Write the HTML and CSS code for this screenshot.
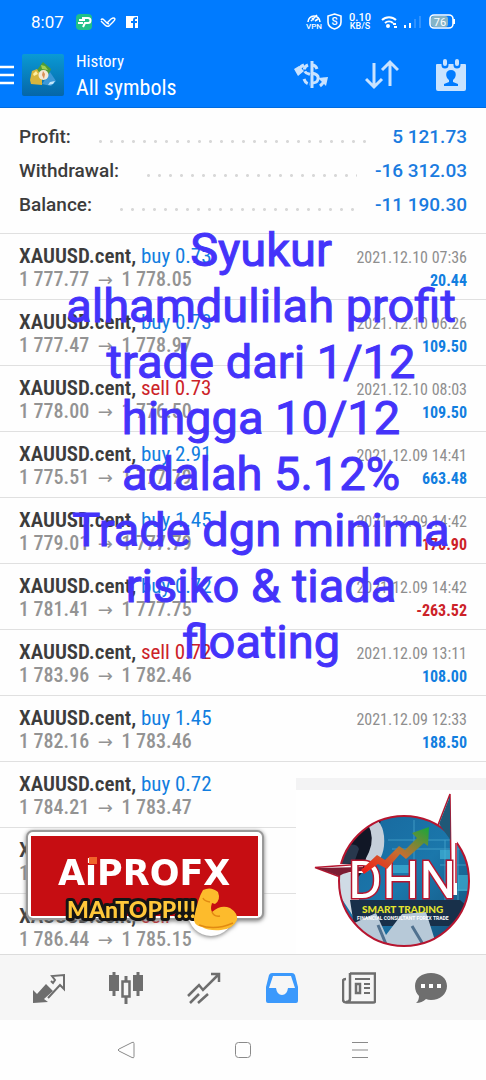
FILE: index.html
```
<!DOCTYPE html>
<html lang="en">
  <head>
    <meta charset="utf-8">
    <meta name="viewport" content="width=device-width, initial-scale=1">
    <title>History</title>
    <link rel="stylesheet" href="styles.css">
  </head>
  <body>
    <header>
      <div class="status">
        <span class="clock">8:07</span>
        <svg width="64" height="18" viewBox="0 0 64 18">
          <rect x="0" y="1" width="16" height="16" rx="4" fill="#1fc08a"/>
          <path d="M6 5h6a2 2 0 0 1 0 5H9l-2 4M3 7h6M2 10h5" fill="none" stroke="#fff" stroke-width="2"/>
          <path d="M25 7q1-2 3 0l3 3 4-4q3-2 4 0 0 1-2 3l-4 4q-2 1-4-1l-4-4M31 10l2 1" fill="none" stroke="#fff" stroke-width="1.400"/>
          <path d="M50 3h12v12h-3v-5h2V8h-2V7c0-1 0-1 2-1V4c-3 0-4 1-4 3v1h-2v2h2v5h-7z" fill="#fff"/>
        </svg>
        <svg class="status-right" width="150" height="20" viewBox="305 12 150 20">
          <g fill="none" stroke="#fff" stroke-width="1.6">
            <path d="M308 22a6 6 0 0 1 12 0M311 21l6-6M312 18l2 2M315 21l3-2"/>
            <path d="M334.500 14l6.500 2v6c0 4-3 6-6.500 7-3.500-1-6.500-3-6.500-7v-6z"/>
            <path d="M382 20a10 10 0 0 1 14 0M385 23a6 6 0 0 1 8 0" stroke-width="2"/>
            <rect x="430" y="15" width="23" height="13" rx="4"/>
          </g>
          <circle cx="388" cy="26" r="2" fill="#fff"/>
          <path d="M393 23h3v2h-3zM394 26h3v2h-3zM404 25h2v3h-2zM409 23h2v5h-2z" fill="#fff"/>
          <path d="M414 19h2v9h-2zM419 16h2v12h-2z" fill="#2f92ff"/>
          <rect x="431" y="16" width="17" height="11" rx="3" fill="#84b4c8"/>
          <path d="M454 19v5" stroke="#fff" stroke-width="2"/>
          <g fill="#fff" font-family="Roboto, sans-serif" font-weight="500" text-anchor="middle">
            <text x="314" y="29" font-size="8">VPN</text>
            <text x="334.500" y="25" font-size="10">S</text>
            <text x="360" y="21" font-size="11">0.10</text>
            <text x="360" y="29" font-size="9">KB/S</text>
            <text x="440" y="26" font-size="11" font-weight="400">76</text>
          </g>
        </svg>
      </div>
      <div class="toolbar">
        <button class="menu" aria-label="Menu">
          <svg width="14" height="20" viewBox="0 0 14 20"><path d="M0 2h14M0 10h14M0 18h14" stroke="#fff" stroke-width="2.500"/></svg>
        </button>
        <svg class="app-icon" width="42" height="42" viewBox="0 0 42 42">
          <defs>
            <linearGradient id="sea" x1="0" y1="0" x2="0" y2="1"><stop offset="0" stop-color="#0a9ad4"/><stop offset="1" stop-color="#0566a8"/></linearGradient>
          </defs>
          <rect width="42" height="42" rx="2" fill="url(#sea)"/>
          <path d="M15 16l6-8 8 7-2 5-12-1z" fill="#4c9c3a"/>
          <path d="M19 11l4 1 3 4-6-1z" fill="#a4cf52"/>
          <path d="M8 26l2-9 5-2 5 8v8l-11-1z" fill="#d7b53d"/>
          <path d="M11 20l3-3 2 3-4 2z" fill="#fff0a0"/>
          <path d="M28 18l6 9-5 5-9-2z" fill="#3c98d8"/>
          <path d="M28 28l5-1-2 3-5 1z" fill="#c3e6fa"/>
          <circle cx="21.500" cy="21" r="5" fill="#f3ead7"/>
          <path d="M21 17l2 3-1 5-2-4z" fill="#d99058"/>
        </svg>
        <div class="titles">
          <h1>History</h1>
          <p>All symbols</p>
        </div>
        <button aria-label="Currency">
          <svg width="36" height="34" viewBox="0 0 36 34" fill="none" stroke="#c9e3ff" stroke-width="3">
            <path d="M19 3v27M24 11c-1-3-2-4-5-4M19 15l3 1c5 2 4 9-3 9"/>
            <path d="M15 7c-5 2-5 8 1 9l3 1M11 21c1 3 3 5 6 5" stroke-dasharray="6 2"/>
            <path d="M6 13q0-4 5-6M32 20q-1 5-5 8"/>
            <path d="M1 11l5-3 5 5-6 5zM25 20l10-1-2 9z" fill="#c9e3ff" stroke="none"/>
          </svg>
        </button>
        <button aria-label="Sort">
          <svg width="34" height="34" viewBox="0 0 34 34" fill="none" stroke="#c9e3ff" stroke-width="3"><path d="M9 5v24M1 21l8 8 8-8M25 28V4M17 12l8-8 8 8"/></svg>
        </button>
        <button aria-label="Period">
          <svg width="32" height="34" viewBox="0 0 32 34">
            <path d="M2 6h28q1 0 1 1v24q0 2-2 2H3q-2 0-2-2V7q0-1 1-1z" fill="#c9e3ff"/>
            <path d="M10 3v4M22 3v4" stroke="#007bff" stroke-width="7" stroke-linecap="round"/>
            <path d="M10 3v3M22 3v3" stroke="#c9e3ff" stroke-width="4" stroke-linecap="round"/>
            <path d="M16 12c6 0 6 7 2 10v2l5 2v2H9v-2l5-2v-2c-4-3-4-10 2-10z" fill="#007bff"/>
          </svg>
        </button>
      </div>
    </header>

    <main>
      <dl class="summary">
        <div><dt>Profit:</dt><dd>5 121.73</dd></div>
        <div><dt>Withdrawal:</dt><dd>-16 312.03</dd></div>
        <div><dt>Balance:</dt><dd>-11 190.30</dd></div>
      </dl>

      <ul class="deals">
        <li>
          <div class="deal"><b>XAUUSD.cent,</b> <span class="buy">buy 0.73</span><p>1 777.77 <i>→</i> 1 778.05</p></div>
          <div class="result"><time>2021.12.10 07:36</time><b class="buy">20.44</b></div>
        </li>
        <li>
          <div class="deal"><b>XAUUSD.cent,</b> <span class="buy">buy 0.73</span><p>1 777.47 <i>→</i> 1 778.97</p></div>
          <div class="result"><time>2021.12.10 06:26</time><b class="buy">109.50</b></div>
        </li>
        <li>
          <div class="deal"><b>XAUUSD.cent,</b> <span class="sell">sell 0.73</span><p>1 778.00 <i>→</i> 1 776.50</p></div>
          <div class="result"><time>2021.12.10 08:03</time><b class="buy">109.50</b></div>
        </li>
        <li>
          <div class="deal"><b>XAUUSD.cent,</b> <span class="buy">buy 2.91</span><p>1 775.51 <i>→</i> 1 777.79</p></div>
          <div class="result"><time>2021.12.09 14:41</time><b class="buy">663.48</b></div>
        </li>
        <li>
          <div class="deal"><b>XAUUSD.cent,</b> <span class="buy">buy 1.45</span><p>1 779.01 <i>→</i> 1 777.79</p></div>
          <div class="result"><time>2021.12.09 14:42</time><b class="sell">-176.90</b></div>
        </li>
        <li>
          <div class="deal"><b>XAUUSD.cent,</b> <span class="buy">buy 0.72</span><p>1 781.41 <i>→</i> 1 777.75</p></div>
          <div class="result"><time>2021.12.09 14:42</time><b class="sell">-263.52</b></div>
        </li>
        <li>
          <div class="deal"><b>XAUUSD.cent,</b> <span class="sell">sell 0.72</span><p>1 783.96 <i>→</i> 1 782.46</p></div>
          <div class="result"><time>2021.12.09 13:11</time><b class="buy">108.00</b></div>
        </li>
        <li>
          <div class="deal"><b>XAUUSD.cent,</b> <span class="buy">buy 1.45</span><p>1 782.16 <i>→</i> 1 783.46</p></div>
          <div class="result"><time>2021.12.09 12:33</time><b class="buy">188.50</b></div>
        </li>
        <li>
          <div class="deal"><b>XAUUSD.cent,</b> <span class="buy">buy 0.72</span><p>1 784.21 <i>→</i> 1 783.47</p></div>
        </li>
        <li>
          <div class="deal"><b>XAUUSD.cent,</b><p>1</p></div>
        </li>
        <li>
          <div class="deal"><b>XAUUSD.cent,</b> <span class="sell">sell</span><p>1 786.44 <i>→</i> 1 785.15</p></div>
        </li>
      </ul>

      <p class="caption">Syukur<br>alhamdulilah profit<br>trade dari 1/12<br>hingga 10/12<br>adalah 5.12%<br>Trade dgn minima<br>risiko &amp; tiada<br>floating</p>

      <!-- AiPROFX sticker -->
      <div class="sticker">
        <svg width="242" height="110" viewBox="24 828 242 110">
          <rect x="27" y="831" width="236" height="88" rx="6" fill="#fff" stroke="#999" stroke-width="2"/>
          <circle cx="211" cy="913" r="23" fill="#fff"/>
          <rect x="31" y="836" width="227" height="80" fill="#c60d12"/>
          <text class="brand" x="58" y="885">AiPROFX</text>
          <path d="M89 857h8v7h-8z" fill="#f0642a"/>
          <text class="cheer" x="67" y="918">MAnTOPP!!!</text>
          <path d="M203 890q8-4 15 2 3 8-3 12l-3-1q-2 6 0 9 9-8 18-4 8 5 7 12-4 9-16 10-12 1-19-3-9-2-8-9 4-20 9-28z" fill="#fdbb2c"/>
          <path d="M210 902q-6-1-7-4M212 912q2 5 8 4M199 925q16 6 34-2" fill="none" stroke="#e18a12" stroke-width="1.500"/>
        </svg>
      </div>

      <!-- DHN sticker -->
      <div class="dhn">
        <svg width="190" height="164" viewBox="296 790 190 164">
          <defs>
            <linearGradient id="tech" x1="0" y1="0" x2="1" y2="1"><stop offset="0" stop-color="#17649a"/><stop offset=".5" stop-color="#1b77ab"/><stop offset="1" stop-color="#12486f"/></linearGradient>
            <linearGradient id="trend" x1="0" y1="1" x2="1" y2="0"><stop offset="0" stop-color="#f51616"/><stop offset=".5" stop-color="#c66e31"/><stop offset="1" stop-color="#16a83b"/></linearGradient>
            <clipPath id="disc"><circle cx="404" cy="881" r="65"/></clipPath>
          </defs>
          <g clip-path="url(#disc)">
            <path d="M330 810h150v144H330z" fill="url(#tech)"/>
            <path d="M388 840h85M392 849h80M440 865h30M440 890h30M414 820v50M445 840v80M458 845v70" stroke="#58b5d9" stroke-width="1" opacity=".6"/>
            <path d="M440 850h16v9h-16zM458 875h12v16h-12zM393 865h19v8h-19z" fill="#47bce0" opacity=".6"/>
            <path d="M335 885v-65h46l-6 21-8 26-14 16z" fill="#111726"/>
            <path d="M372 816q14 8 12 30-2 18-18 26-4-8 3-20 6-14-1-28z" fill="#c5cfda"/>
            <path d="M343 846q14-4 16 3l-5 14-14 2z" fill="#28384d"/>
            <path d="M336 872h22l1 30 11 12-8 16-22-34z" fill="#cfdbe5"/>
            <path d="M350 900h110l9 8-20 18h-95z" fill="#18304a"/>
            <path d="M350 925l26-12 10 22 16-21 24-2 12 38h-62z" fill="#b7c9d8"/>
            <path d="M378 925l10 24M412 926l12 20" stroke="#50718f" stroke-width="3"/>
          </g>
          <circle cx="404" cy="881" r="65" fill="none" stroke="#b6152f" stroke-width="2"/>
          <path d="M451 793h4l2 50v52h-6z" fill="#fff"/>
          <path d="M438 825l12-31 1 80M456 843v40" fill="none" stroke="#b6152f" stroke-width="1.500"/>
          <path d="M439 824l11-28 .5 44z" fill="#205877"/>
          <path d="M337 864h26v9h-26z" fill="#fff"/>
          <path d="M363 864l-48 3.500 24 9" fill="none" stroke="#b6152f" stroke-width="1.500"/>
          <path d="M317 868l46-1v4q-16 0-24 5z" fill="#7d1c33"/>
          <text class="dhn-name" x="348" y="898">DHN</text>
          <path d="M361 870l16-15 8 5 14-14 6 4 12-12-5-5 17-6-1 19-4-3-18 16-6-5-13 15-9-5-14 10z" fill="url(#trend)"/>
          <text class="dhn-line" x="362" y="913">SMART TRADING</text>
          <text class="dhn-small" x="357" y="920">FINANCIAL CONSULTANT FOREX TRADE</text>
        </svg>
      </div>
    </main>

    <nav class="tabs">
      <a href="#quotes" aria-label="Quotes">
        <svg width="34" height="32" viewBox="0 0 34 32"><path d="M1 31V18l4 4 9-10 7 7-9 8 4 3z" fill="#6e6e6e"/><path d="M19 9l2 2 2-3-3-4 12-1v14l-4-4-12 13" fill="none" stroke="#6e6e6e" stroke-width="2"/></svg>
      </a>
      <a href="#chart" aria-label="Chart">
        <svg width="34" height="34" viewBox="0 0 34 34"><path d="M5 1v24M29 1v24M17 5v5M17 26v7" stroke="#6e6e6e" stroke-width="3"/><path d="M0 4h10v16H0zM24 4h10v16H24z" fill="#6e6e6e"/><path d="M13.500 10.500h7v15h-7z" fill="none" stroke="#6e6e6e" stroke-width="2.500"/></svg>
      </a>
      <a href="#trade" aria-label="Trade">
        <svg width="34" height="32" viewBox="0 0 34 32" fill="none" stroke="#6e6e6e" stroke-width="2.500"><path d="M1 24l11-11 4 5L31 3M24 2h8v8M3 31l9-9M11 31l10-9"/></svg>
      </a>
      <a class="active" href="#history" aria-label="History">
        <svg width="34" height="32" viewBox="0 0 34 32"><path fill-rule="evenodd" d="M7 1h20q2 0 3 2l3 12v14q0 2-2 2H3q-2 0-2-2V15L4 3q1-2 3-2zM8 4L4 16h7q1 7 6 7t6-7h7L26 4z" fill="#3b99fc"/></svg>
      </a>
      <a href="#news" aria-label="News">
        <svg width="34" height="32" viewBox="0 0 34 32" fill="none" stroke="#6e6e6e" stroke-width="2.500"><path d="M8 1.500h25v28q0 1-2 1H4q-3 0-3-3V9q0-2 3-2M8 1v26q0 3-4 3"/><path d="M13 7h15M22 12h6M22 16h6M22 21h6" stroke-width="2"/><path d="M14 12h4v9h-4z"/></svg>
      </a>
      <a href="#messages" aria-label="Messages">
        <svg width="34" height="32" viewBox="0 0 34 32"><path d="M17 1c9 0 16 5 16 13s-7 14-16 14q-3 0-5-1-4 4-10 4 3-2 3-7-4-4-4-10C1 6 8 1 17 1z" fill="#6e6e6e"/><path d="M7 12h4v4H7zM15 12h4v4h-4zM23 12h4v4h-4z" fill="#fff"/></svg>
      </a>
    </nav>

    <footer>
      <button aria-label="Back"><svg width="18" height="18" viewBox="0 0 18 18"><path d="M15 1.500q2-1 2 1v13q0 2-2 1L2 10q-2-1 0-2z"/></svg></button>
      <button aria-label="Home"><svg width="18" height="18" viewBox="0 0 18 18"><rect x="1.500" y="1.500" width="15" height="15" rx="3"/></svg></button>
      <button aria-label="Recent apps"><svg width="18" height="18" viewBox="0 0 18 18"><path d="M1 1.500h16M1 9h16M1 16.500h16"/></svg></button>
    </footer>
  </body>
</html>
```
FILE: styles.css
```
* {
    box-sizing: border-box;
}

body {
    display: flex;
    flex-direction: column;
    height: 100vh;
    margin: 0;
    background: #fefefe;
    color: #3c3c3c;
    font-family: "Roboto Condensed", "Liberation Sans Narrow", Roboto, sans-serif;
}

h1, p, dl, dd, ul {
    margin: 0;
    padding: 0;
}

button {
    display: flex;
    padding: 0;
    border: none;
    background: none;
    cursor: pointer;
}

svg {
    display: block;
}

/* header */
header {
    flex: none;
    height: 108px;
    background: #007bff;
    border-bottom: 1px solid #006ce0;
    color: #fff;
}

.status {
    display: flex;
    align-items: center;
    height: 44px;
    padding: 0 31px;
}

.clock {
    margin-right: 12px;
    font: 17px/20px Roboto, sans-serif;
}

.status-right {
    margin-left: auto;
}

.toolbar {
    display: flex;
    align-items: center;
    height: 62px;
    padding-right: 19px;
}

.app-icon {
    margin: 0 12px 0 8px;
}

.titles {
    flex: 1;
}

.titles h1 {
    font-size: 17px;
    line-height: 26px;
    font-weight: 400;
}

.titles p {
    font-size: 22px;
    line-height: 28px;
}

.toolbar button + button {
    margin-left: 36px;
}

/* account totals */
main {
    position: relative;
    flex: 1;
    min-height: 0;
    overflow: hidden;
}

.summary {
    padding: 12px 19px 11px;
    border-bottom: 1px solid #e0e0e0;
    font: 500 19px/34px Roboto, sans-serif;
}

.summary div {
    display: flex;
    align-items: center;
}

.summary div::after {
    content: "";
    order: 1;
    flex: 1;
    height: 3px;
    margin: 8px 18px 0 24px;
    background: radial-gradient(circle, #d8d8d8 1px, transparent 2px) 0 0 / 11px 3px;
}

.summary dd {
    order: 2;
    color: #1a7be0;
}

/* deals */
.deals {
    list-style: none;
}

.deals li {
    display: flex;
    justify-content: space-between;
    height: 66px;
    padding: 10px 19px 0;
    border-bottom: 1px solid #e0e0e0;
}

.deal {
    font-size: 21px;
    line-height: 24px;
}

.deal b {
    font-weight: 600;
}

.deal p {
    color: #939393;
    font-size: 20px;
    font-weight: 500;
    line-height: 22px;
}

.deal i {
    margin: 0 4px;
    font: 18px/18px "DejaVu Sans", sans-serif;
}

.result {
    display: flex;
    flex-direction: column;
    padding-top: 2px;
    font-size: 16px;
    line-height: 23px;
    text-align: right;
}

.result time {
    color: #8e8e8e;
}

.buy {
    color: #127ee0;
}

.sell {
    color: #cc2228;
}

/* things laid over the list */
.caption {
    position: absolute;
    top: 114px;
    left: 36px;
    right: 0;
    color: #4433fa;
    font: 47px/56px Roboto, sans-serif;
    -webkit-text-stroke: 1px #4433fa;
    text-align: center;
    white-space: nowrap;
}

.sticker {
    position: absolute;
    left: 24px;
    bottom: 16px;
    filter: drop-shadow(0 1px 2px #777);
}

.brand {
    fill: #fff;
    font: bold 35px "DejaVu Sans", sans-serif;
}

.cheer {
    fill: #ffc83a;
    stroke: #151515;
    stroke-width: 6px;
    stroke-linejoin: round;
    paint-order: stroke;
    font: 900 23px Lato, sans-serif;
}

.dhn {
    position: absolute;
    right: 0;
    bottom: 0;
    border-top: 12px solid #f3f3f4;
    background: #fff;
}

.dhn-name {
    fill: #fff;
    stroke: #b6152f;
    stroke-width: 3px;
    paint-order: stroke;
    font: 52px Roboto, sans-serif;
}

.dhn-line {
    fill: #e6e52e;
    font: 900 10px Lato, sans-serif;
}

.dhn-small {
    fill: #fff;
    font: bold 5px Roboto, sans-serif;
}

/* bottom tabs */
.tabs {
    flex: none;
    display: grid;
    grid-template-columns: repeat(5, 13fr) 11fr;
    align-items: center;
    justify-items: center;
    height: 66px;
    padding: 0 22px 0 10px;
    border-top: 1px solid #dcdcdc;
    background: #f6f6f6;
}

footer {
    flex: none;
    display: grid;
    grid-template-columns: repeat(3, 1fr);
    align-items: center;
    justify-items: center;
    height: 60px;
    padding: 0 68px;
}

footer svg {
    fill: none;
    stroke: #8a8a8a;
}
```
